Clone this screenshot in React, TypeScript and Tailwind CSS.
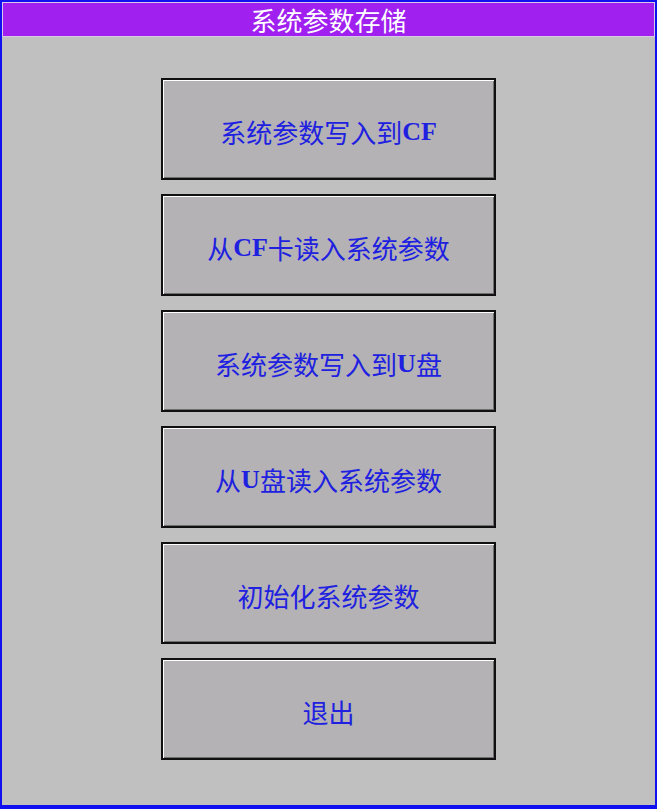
import React from "react";

const latin = "font-bold font-['Liberation_Serif',serif]";

const labels: React.ReactNode[] = [
  <>系统参数写入到<span className={latin}>CF</span></>,
  <>从<span className={latin}>CF</span>卡读入系统参数</>,
  <>系统参数写入到<span className={latin}>U</span>盘</>,
  <>从<span className={latin}>U</span>盘读入系统参数</>,
  <>初始化系统参数</>,
  <>退出</>,
];

export default function App() {
  return (
    <div className="w-[657px] h-[809px] bg-[#1010f0] pt-[2px] px-[2px] pb-[4px] font-['Noto_Sans_CJK_SC','Noto_Sans',sans-serif]">
      <div className="w-full h-full bg-[#c0c0c0] flex flex-col">
        <div className="h-[35px] bg-[#a020f0] border border-[#d8c8e8] flex items-center justify-center text-white text-[26px] leading-none">
          系统参数存储
        </div>
        <div className="flex flex-col items-center gap-[14px] pt-[41px]">
          {labels.map((l, i) => (
            <div
              key={i}
              className="w-[335px] h-[102px] pt-[6px] bg-[#b4b2b4] border-2 border-[#101010] flex items-center justify-center text-[#2020e0] text-[26px] leading-none shadow-[inset_1px_1px_0_#ffffff,inset_-1px_-1px_0_#707070]"
            >
              {l}
            </div>
          ))}
        </div>
      </div>
    </div>
  );
}
